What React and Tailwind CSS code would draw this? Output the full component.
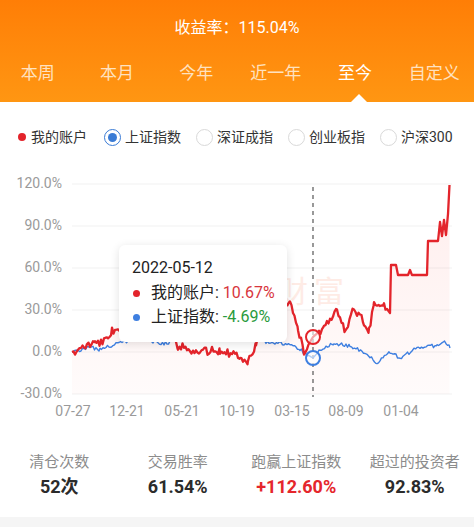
import React from "react";

const tabs = ["本周", "本月", "今年", "近一年", "至今", "自定义"];
const indexes = ["上证指数", "深证成指", "创业板指", "沪深300"];
const stats = [
  { label: "清仓次数", value: "52次", color: "text-[#2b2b2b]" },
  { label: "交易胜率", value: "61.54%", color: "text-[#2b2b2b]" },
  { label: "跑赢上证指数", value: "+112.60%", color: "text-[#e5262c]" },
  { label: "超过的投资者", value: "92.83%", color: "text-[#2b2b2b]" },
];

const yTicks = [
  ["120.0%", 184],
  ["90.0%", 226],
  ["60.0%", 268],
  ["30.0%", 310],
  ["0.0%", 352],
  ["-30.0%", 394],
];
const xTicks = [
  ["07-27", 73],
  ["12-21", 127],
  ["05-21", 182],
  ["10-19", 237],
  ["03-15", 292],
  ["08-09", 346],
  ["01-04", 401],
];

function mulberry32(a) {
  return function () {
    a |= 0;
    a = (a + 0x6d2b79f5) | 0;
    let t = Math.imul(a ^ (a >>> 15), 1 | a);
    t = (t + Math.imul(t ^ (t >>> 7), 61 | t)) ^ t;
    return ((t ^ (t >>> 14)) >>> 0) / 4294967296;
  };
}

// walk between key points, add jitter where amp(x) > 0
function series(keys, step, amp, seed) {
  const r = mulberry32(seed);
  const pts = [];
  for (let i = 0; i < keys.length - 1; i++) {
    const [x0, y0] = keys[i];
    const [x1, y1] = keys[i + 1];
    if (x1 - x0 < step) {
      pts.push([x0, y0]);
      continue;
    }
    for (let x = x0; x < x1; x += step) {
      const t = (x - x0) / (x1 - x0);
      const a = amp(x);
      pts.push([x, y0 + (y1 - y0) * t + (r() - 0.5) * 2 * a]);
    }
  }
  pts.push(keys[keys.length - 1]);
  return pts;
}

const red = series(
  [
    [72, 352], [84, 347], [95, 343], [108, 340], [112, 331], [130, 322],
    [150, 318], [170, 326], [178, 346], [200, 352], [220, 350], [240, 356],
    [248, 361], [256, 345], [262, 320], [280, 315], [290, 299], [298, 330],
    [304, 352], [313, 337], [324, 327], [337, 308], [345, 332], [354, 308],
    [364, 322], [369, 330], [374, 303], [384, 305], [390, 313], [391, 265],
    [396, 265], [398, 275], [408, 275], [410, 270], [412, 275], [427, 275],
    [428, 241], [438, 241], [440, 222], [442, 236], [444, 220], [446, 235],
    [448, 214], [449.5, 185],
  ],
  1.5,
  (x) => (x < 388 && x > 74 && !(x > 308 && x < 318) ? 4 : 0),
  7
);

const blue = series(
  [
    [72, 352], [90, 347], [100, 350], [110, 346], [122, 342], [135, 339],
    [150, 340], [158, 344], [170, 342], [180, 338], [200, 339], [230, 338],
    [260, 339], [272, 344], [287, 343], [300, 350], [308, 355], [313, 358],
    [320, 350], [334, 343], [350, 346], [364, 352], [377, 363], [390, 352],
    [400, 358], [414, 350], [437, 345], [446, 342], [450, 348],
  ],
  1.5,
  (x) => (x > 74 && !(x > 308 && x < 318) ? 2 : 0),
  21
);

const toPath = (pts) =>
  pts.map(([x, y], i) => `${i ? "L" : "M"}${x.toFixed(1)} ${y.toFixed(1)}`).join("");

const Chart = () => {
  const redPath = toPath(red);
  const area = `${redPath}L449.5 394L72 394Z`;
  return (
    <div className="relative h-[253px]">
      <svg width="474" height="253" viewBox="0 172 474 253" className="block">
        <defs>
          <linearGradient id="fill" x1="0" y1="0" x2="0" y2="1">
            <stop offset="0" stopColor="#ff3b30" stopOpacity="0.09" />
            <stop offset="1" stopColor="#ff3b30" stopOpacity="0.02" />
          </linearGradient>
        </defs>
        {yTicks.map(([t, y]) => (
          <g key={t}>
            <line x1="72" x2="452" y1={y} y2={y} stroke="#f1f1f1" strokeWidth="1" />
            <text x="62" y={y} textAnchor="end" dominantBaseline="middle" fontSize="14" fill="#9a9a9a">
              {t}
            </text>
          </g>
        ))}
        {xTicks.map(([t, x]) => (
          <text key={t} x={x} y="412" textAnchor="middle" dominantBaseline="middle" fontSize="14" fill="#9a9a9a">
            {t}
          </text>
        ))}
        <text x="278" y="302" fontSize="30" fill="#feebe5" letterSpacing="6">
          财富
        </text>
        <path d={area} fill="url(#fill)" />
        <line x1="313" x2="313" y1="187" y2="397" stroke="#555" strokeWidth="1.2" strokeDasharray="4 4" />
        <path d={toPath(blue)} fill="none" stroke="#3e7fe0" strokeWidth="1.4" strokeLinejoin="round" />
        <path d={redPath} fill="none" stroke="#e3242b" strokeWidth="2.3" strokeLinejoin="round" />
        <circle cx="313" cy="337" r="7" fill="#fff" fillOpacity="0.6" stroke="#e3242b" strokeWidth="2" />
        <circle cx="313" cy="358" r="7" fill="#fff" fillOpacity="0.6" stroke="#3e7fe0" strokeWidth="2" />
      </svg>

      <div className="absolute left-[119px] top-[73px] h-[97px] w-[168px] whitespace-nowrap rounded-md bg-white px-[13px] pt-[12px] shadow-[0_2px_10px_rgba(0,0,0,0.12)]">
        <p className="text-[16px] leading-[22px] text-[#222]">2022-05-12</p>
        <div className="mt-[2px] flex items-center text-[16px] leading-[24px]">
          <span className="mr-[11px] ml-[1px] h-[7px] w-[7px] shrink-0 rounded-full bg-[#e3242b]" />
          <span className="text-[#222]">我的账户:&nbsp;</span>
          <span className="text-[#d8363d]">10.67%</span>
        </div>
        <div className="flex items-center text-[16px] leading-[24px]">
          <span className="mr-[11px] ml-[1px] h-[7px] w-[7px] shrink-0 rounded-full bg-[#3e7fe0]" />
          <span className="text-[#222]">上证指数:&nbsp;</span>
          <span className="text-[#2a9a3c]">-4.69%</span>
        </div>
      </div>
    </div>
  );
};

export default function App() {
  return (
    <div className="h-[527px] w-[474px] overflow-hidden bg-white font-['Roboto','Noto_Sans_CJK_SC',sans-serif]">
      <div className="h-[102px] bg-gradient-to-b from-[#ff7e06] to-[#ff9612]">
        <div className="flex h-[50px] items-center justify-center pt-[5px] text-[16px] text-white">
          收益率：115.04%
        </div>
        <div className="-ml-0.5 grid h-[52px] grid-cols-6 pb-[5px]">
          {tabs.map((t) => (
            <div
              key={t}
              className={`relative flex items-center justify-center text-[17px] ${
                t === "至今" ? "text-white" : "text-[#ffe2c0]"
              }`}
            >
              {t}
              {t === "至今" && (
                <span className="absolute -bottom-[5px] left-1/2 ml-[-4px] h-0 w-0 border-x-[8px] border-b-[8px] border-x-transparent border-b-white" />
              )}
            </div>
          ))}
        </div>
      </div>

      <div className="flex h-[70px] items-center whitespace-nowrap pl-[18px] text-[14px] text-[#333]">
        <span className="mr-[5px] h-[8px] w-[8px] rounded-full bg-[#e3242b]" />
        <span className="mr-[17px]">我的账户</span>
        {indexes.map((t, i) => (
          <div key={t} className="mr-[15px] flex items-center">
            {i === 0 ? (
              <span className="mr-[4px] flex h-[17px] w-[17px] items-center justify-center rounded-full border-[1.5px] border-[#3a7bd5]">
                <span className="h-[9px] w-[9px] rounded-full bg-[#3a7bd5]" />
              </span>
            ) : (
              <span className="mr-[4px] h-[17px] w-[17px] rounded-full border border-[#d9d9d9]" />
            )}
            <span>{t}</span>
          </div>
        ))}
      </div>

      <Chart />

      <div className="grid h-[92px] grid-cols-4 pt-[27px] text-center">
        {stats.map((s) => (
          <div key={s.label} className="flex flex-col items-center">
            <span className="text-[15px] leading-[20px] text-[#8c8c8c]">{s.label}</span>
            <span className={`mt-[3px] text-[18px] font-bold leading-[24px] ${s.color}`}>{s.value}</span>
          </div>
        ))}
      </div>
      <div className="h-[10px] bg-[#f5f5f5]" />
    </div>
  );
}
